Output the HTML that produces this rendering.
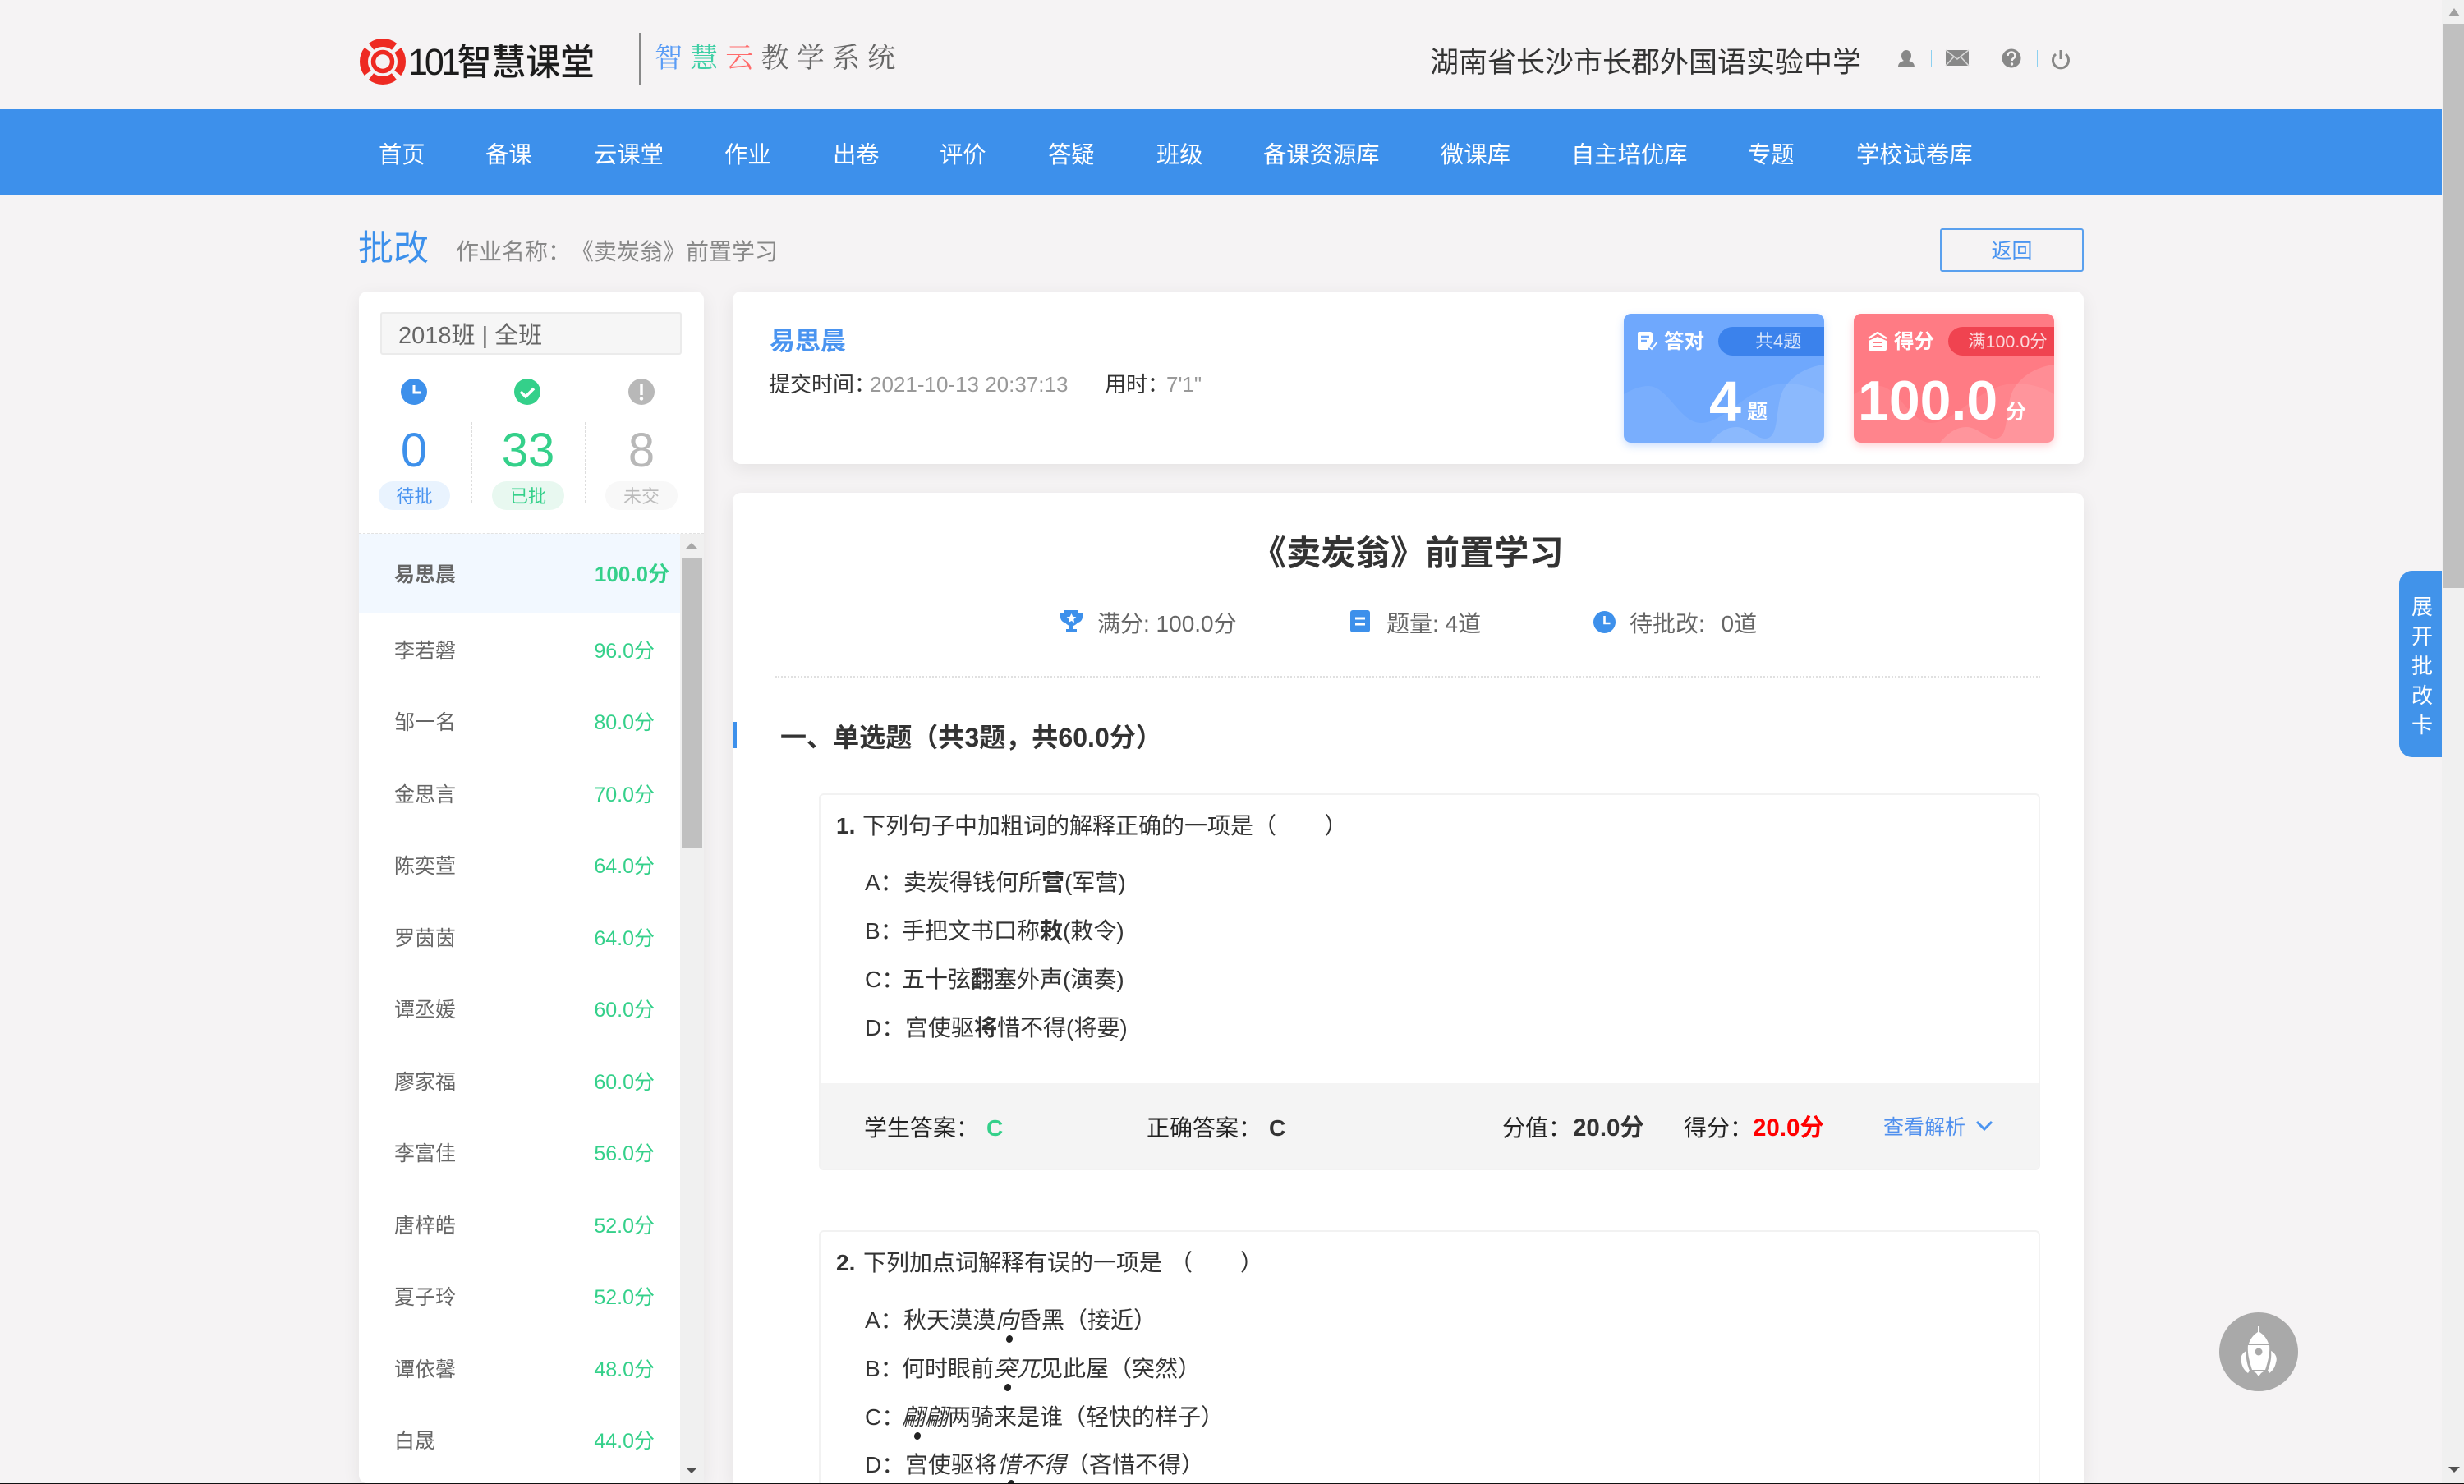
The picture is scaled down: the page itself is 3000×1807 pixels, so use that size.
<!DOCTYPE html>
<html lang="zh-CN"><head><meta charset="utf-8"><title>批改</title>
<style>
html,body{margin:0;padding:0;width:3000px;height:1807px;overflow:hidden;background:#f5f3f4;font-family:"Liberation Sans","Noto Sans CJK SC",sans-serif}
#w{position:relative;width:3000px;height:1807px;overflow:hidden}
.a{position:absolute}
.t{position:absolute;white-space:nowrap;line-height:40px;height:40px}
.c{position:absolute;text-align:center;white-space:nowrap;line-height:40px;height:40px}
.card{position:absolute;background:#fff;border-radius:10px;box-shadow:0 6px 22px rgba(0,0,0,.07)}
.nav{font-size:28.3px;color:#fff;top:168px}
.n{font-size:25px;color:#666;left:480px}
.s{font-size:25px;color:#34d08a;width:140px;left:657px;text-align:right}
.q{font-size:28px;color:#333}
.dot{position:absolute;width:8px;height:9px;border-radius:50%;background:#222;transform:rotate(20deg)}
em{font-style:italic}
b{font-weight:700}
</style></head><body><div id="w">

<!-- header -->
<svg class="a" style="left:438px;top:47px" width="56" height="56" viewBox="0 0 56 56">
<circle cx="28" cy="28" r="23" fill="none" stroke="#ee2a22" stroke-width="10" stroke-dasharray="30.1 6" stroke-dashoffset="15"/>
<circle cx="28" cy="28" r="11.5" fill="none" stroke="#ee2a22" stroke-width="5.5"/>
</svg>
<div class="t" style="left:497px;top:54px;font-size:41.800px;line-height:44px;height:44px;color:#1c1c1c;font-weight:500;transform:scaleY(1.06);transform-origin:0 50%"><span style="letter-spacing:-4px;font-size:43px">101</span>智慧课堂</div>
<div class="a" style="left:778px;top:40px;width:2px;height:63px;background:#888"></div>
<div class="t" style="left:797px;top:52px;font-family:'Liberation Serif','Noto Serif CJK SC',serif;font-size:34px;letter-spacing:9.200px;color:#666"><span style="color:#5a9cf5">智</span><span style="color:#3fcfa5">慧</span><span style="color:#ff6b6b">云</span>教学系统</div>

<div class="t" style="left:1741px;top:57px;font-size:35px;color:#333">湖南省长沙市长郡外国语实验中学</div>

<svg class="a" style="left:2300px;top:50px" width="230" height="40" viewBox="0 0 230 40">
<ellipse cx="21" cy="18" rx="6" ry="7" fill="#888"/><path d="M11 32c0-6 4-7 7-8h6c3 1 7 2 7 8z" fill="#888"/>
<rect x="51" y="11" width="1" height="20" fill="#8cd0f0"/>
<rect x="69" y="11" width="28" height="19" fill="#888"/><path d="M69 11l14 11 14-11M69 30l10-11M97 30l-10-11" fill="none" stroke="#d8d8d8" stroke-width="1.6"/>
<rect x="115" y="11" width="1" height="20" fill="#8cd0f0"/>
<circle cx="149" cy="21" r="11.5" fill="#888"/><path d="M144.500 18c0-6 9-6 9 0 0 3-4 3-4 6" fill="none" stroke="#f5f3f4" stroke-width="2.600"/><circle cx="149.500" cy="28" r="1.700" fill="#f5f3f4"/>
<rect x="180" y="11" width="1" height="20" fill="#8cd0f0"/>
<path d="M203 16a9.500 9.500 0 1 0 12 0" fill="none" stroke="#888" stroke-width="3"/><path d="M209 11v11" stroke="#888" stroke-width="3"/>
</svg>

<!-- nav -->
<div class="a" style="left:0;top:133px;width:2973px;height:105px;background:#3d90eb"></div>
<div class="t nav" style="left:461px">首页</div>
<div class="t nav" style="left:591px">备课</div>
<div class="t nav" style="left:723px">云课堂</div>
<div class="t nav" style="left:882px">作业</div>
<div class="t nav" style="left:1014px">出卷</div>
<div class="t nav" style="left:1144px">评价</div>
<div class="t nav" style="left:1276px">答疑</div>
<div class="t nav" style="left:1408px">班级</div>
<div class="t nav" style="left:1538px">备课资源库</div>
<div class="t nav" style="left:1754px">微课库</div>
<div class="t nav" style="left:1913px">自主培优库</div>
<div class="t nav" style="left:2128px">专题</div>
<div class="t nav" style="left:2260px">学校试卷库</div>

<!-- title row -->
<div class="t" style="left:436px;top:283px;font-size:43px;color:#3d90eb">批改</div>
<div class="t" style="left:555px;top:287px;font-size:28px;color:#888">作业名称：</div>
<div class="t" style="left:695px;top:287px;font-size:28px;color:#888">《卖炭翁》前置学习</div>
<div class="c" style="left:2362px;top:278px;width:171px;height:49px;line-height:53px;border:2px solid #5aa0ee;border-radius:3px;font-size:25px;color:#4a94f0">返回</div>

<!-- left panel -->
<div class="card" style="left:437px;top:355px;width:420px;height:1451px"></div>
<div class="t" style="left:463px;top:380px;width:343px;height:48px;line-height:55px;padding-left:20px;background:#f6f6f6;border:2px solid #ebebeb;border-radius:3px;font-size:29px;color:#666">2018班 | 全班</div>

<svg class="a" style="left:488px;top:461px" width="32" height="32"><circle cx="16" cy="16" r="16" fill="#3d90eb"/><path d="M16 8v9h8" fill="none" stroke="#fff" stroke-width="3"/></svg>
<svg class="a" style="left:626px;top:461px" width="32" height="32"><circle cx="16" cy="16" r="16" fill="#34d08a"/><path d="M8 16l6 6 10-10" fill="none" stroke="#fff" stroke-width="3.500"/></svg>
<svg class="a" style="left:765px;top:461px" width="32" height="32"><circle cx="16" cy="16" r="16" fill="#b8b8b8"/><path d="M16 7v13" stroke="#fff" stroke-width="3.500"/><circle cx="16" cy="24.500" r="2.200" fill="#fff"/></svg>

<div class="c" style="left:454px;top:519px;width:100px;height:60px;line-height:60px;font-size:58px;color:#3d90eb">0</div>
<div class="c" style="left:593px;top:519px;width:100px;height:60px;line-height:60px;font-size:58px;color:#34d08a">33</div>
<div class="c" style="left:731px;top:519px;width:100px;height:60px;line-height:60px;font-size:58px;color:#b8b8b8">8</div>

<div class="c" style="left:461px;top:586px;width:87px;height:35px;line-height:38px;border-radius:18px;background:#e9f3fe;color:#4a94f0;font-size:22px">待批</div>
<div class="c" style="left:599px;top:586px;width:88px;height:35px;line-height:38px;border-radius:18px;background:#e8f8f0;color:#34d08a;font-size:22px">已批</div>
<div class="c" style="left:737px;top:586px;width:88px;height:35px;line-height:38px;border-radius:18px;background:#f8f8f8;color:#bbb;font-size:22px">未交</div>
<div class="a" style="left:574px;top:514px;height:98px;border-left:1px dashed #ddd"></div>
<div class="a" style="left:712px;top:514px;height:98px;border-left:1px dashed #ddd"></div>
<div class="a" style="left:437px;top:649px;width:420px;border-top:1px dashed #e2e2e2"></div>

<div class="a" style="left:437px;top:650px;width:391px;height:97px;background:#f2f8ff"></div>
<div class="a" style="left:828px;top:650px;width:29px;height:1156px;background:#f0f0f0"></div>
<div class="a" style="left:830px;top:679px;width:25px;height:354px;background:#c0c0c0"></div>
<svg class="a" style="left:835px;top:660px" width="14" height="10"><path d="M0 8L7 1l7 7z" fill="#a8a8a8"/></svg>
<svg class="a" style="left:835px;top:1786px" width="14" height="10"><path d="M0 1l7 7 7-7z" fill="#505050"/></svg>

<div class="t n" style="top:680px;font-weight:700">易思晨</div><div class="t s" style="top:679px;left:675px;font-weight:700;font-size:26px">100.0分</div>
<div class="t n" style="top:773px">李若磐</div><div class="t s" style="top:773px">96.0分</div>
<div class="t n" style="top:860px">邹一名</div><div class="t s" style="top:860px">80.0分</div>
<div class="t n" style="top:948px">金思言</div><div class="t s" style="top:948px">70.0分</div>
<div class="t n" style="top:1035px">陈奕萱</div><div class="t s" style="top:1035px">64.0分</div>
<div class="t n" style="top:1123px">罗茵茵</div><div class="t s" style="top:1123px">64.0分</div>
<div class="t n" style="top:1210px">谭丞媛</div><div class="t s" style="top:1210px">60.0分</div>
<div class="t n" style="top:1298px">廖家福</div><div class="t s" style="top:1298px">60.0分</div>
<div class="t n" style="top:1385px">李富佳</div><div class="t s" style="top:1385px">56.0分</div>
<div class="t n" style="top:1473px">唐梓皓</div><div class="t s" style="top:1473px">52.0分</div>
<div class="t n" style="top:1560px">夏子玲</div><div class="t s" style="top:1560px">52.0分</div>
<div class="t n" style="top:1648px">谭依馨</div><div class="t s" style="top:1648px">48.0分</div>
<div class="t n" style="top:1735px">白晟</div><div class="t s" style="top:1735px">44.0分</div>

<!-- student card -->
<div class="card" style="left:892px;top:355px;width:1645px;height:210px"></div>
<div class="t" style="left:937px;top:396px;font-size:31px;font-weight:700;color:#4a94f0">易思晨</div>
<div class="t" style="left:936px;top:448px;font-size:26px;color:#333">提交时间：</div>
<div class="t" style="left:1059px;top:448px;font-size:26px;color:#999">2021-10-13 20:37:13</div>
<div class="t" style="left:1345px;top:448px;font-size:26px;color:#333">用时：</div>
<div class="t" style="left:1420px;top:448px;font-size:26px;color:#999">7'1"</div>

<!-- blue stat -->
<div class="a" style="left:1977px;top:382px;width:244px;height:157px;background:#6fa8fd;border-radius:9px;overflow:hidden;box-shadow:0 4px 10px rgba(90,150,250,.3)">
<svg class="a" style="left:0;top:0" width="244" height="157"><path d="M0 98C10 92 20 88 30 88c24 0 38 45 64 45 30 0 60-48 103-48 18 0 35 5 47 13v59H0z" fill="#fff" fill-opacity=".07"/><path d="M105 157c10-12 20-19 32-19 14 0 24 14 35 14 20 0 10-44 25-64 12-16 30-24 47-26v95z" fill="#fff" fill-opacity=".14"/></svg>
<div class="a" style="left:115px;top:16px;width:129px;height:35px;background:#3b82ec;border-radius:18px 0 0 18px"></div>
<div class="t" style="left:160px;top:14px;font-size:22px;color:rgba(255,255,255,.78)">共4题</div>
<svg class="a" style="left:17px;top:22px" width="25" height="23"><path d="M2 0h13a3 3 0 0 1 3 3v9l-6 10H2a2 2 0 0 1-2-2V2a2 2 0 0 1 2-2z" fill="#fff"/><path d="M4 6h10M4 11h7" stroke="#6fa8fd" stroke-width="2.400"/><path d="M14 18l3 3 7-9" fill="none" stroke="#fff" stroke-width="1.800"/></svg>
<div class="t" style="left:49px;top:15px;font-size:24.500px;font-weight:700;color:#fff">答对</div>
<div class="t" style="left:104px;top:72px;font-size:70px;height:70px;line-height:70px;font-weight:700;color:#fff">4</div>
<div class="t" style="left:150px;top:100px;font-size:25px;font-weight:700;color:#fff">题</div>
</div>

<!-- red stat -->
<div class="a" style="left:2257px;top:382px;width:244px;height:157px;background:#ff7b84;border-radius:9px;overflow:hidden;box-shadow:0 4px 10px rgba(255,110,120,.3)">
<svg class="a" style="left:0;top:0" width="244" height="157"><path d="M0 98C10 92 20 88 30 88c24 0 38 45 64 45 30 0 60-48 103-48 18 0 35 5 47 13v59H0z" fill="#fff" fill-opacity=".07"/><path d="M105 157c10-12 20-19 32-19 14 0 24 14 35 14 20 0 10-44 25-64 12-16 30-24 47-26v95z" fill="#fff" fill-opacity=".14"/></svg>
<div class="a" style="left:115px;top:16px;width:129px;height:35px;background:#f04350;border-radius:18px 0 0 18px"></div>
<div class="t" style="left:139px;top:14px;font-size:21.500px;color:rgba(255,255,255,.8)">满100.0分</div>
<svg class="a" style="left:17px;top:22px" width="24" height="23"><path d="M1 8l11-7 11 7" fill="none" stroke="#fff" stroke-width="2.400"/><path d="M1 11l11-5 11 5v10a2 2 0 0 1-2 2H3a2 2 0 0 1-2-2z" fill="#fff"/><path d="M7 13h10M7 18h10" stroke="#ff7b84" stroke-width="2"/></svg>
<div class="t" style="left:49px;top:15px;font-size:24.500px;font-weight:700;color:#fff">得分</div>
<div class="t" style="left:5px;top:71px;font-size:68px;height:70px;line-height:70px;font-weight:700;color:#fff">100.0</div>
<div class="t" style="left:185px;top:100px;font-size:25px;font-weight:700;color:#fff">分</div>
</div>

<!-- main card -->
<div class="card" style="left:892px;top:600px;width:1645px;height:1206px;border-radius:10px 10px 0 0"></div>
<div class="t" style="left:1524px;top:652px;font-size:42px;letter-spacing:.2px;height:44px;line-height:44px;font-weight:700;color:#333">《卖炭翁》前置学习</div>

<svg class="a" style="left:1291px;top:743px" width="27" height="28" viewBox="0 0 27 28"><path d="M5 0h17v3h5v5c0 4-3 7-6 7-1 2-3 3-5 4v4h4v3H7v-3h4v-4c-2-1-4-2-5-4-3 0-6-3-6-7V3h5z" fill="#3d90eb"/><path d="M13.500 4l1.800 3.700 4 .5-3 2.800.8 4-3.600-2-3.600 2 .8-4-3-2.800 4-.5z" fill="#fff"/></svg>
<div class="t" style="left:1336px;top:740px;font-size:28px;color:#666">满分: 100.0分</div>
<svg class="a" style="left:1644px;top:743px" width="24" height="27"><rect width="24" height="27" rx="3" fill="#3d90eb"/><path d="M6 10h12M6 17h12" stroke="#fff" stroke-width="3"/></svg>
<div class="t" style="left:1688px;top:740px;font-size:28px;color:#666">题量: 4道</div>
<svg class="a" style="left:1940px;top:744px" width="27" height="27"><circle cx="13.500" cy="13.500" r="13.500" fill="#3d90eb"/><path d="M13.500 6v9h7" fill="none" stroke="#fff" stroke-width="2.600"/></svg>
<div class="t" style="left:1984px;top:740px;font-size:28px;color:#666;word-spacing:12px">待批改: 0道</div>
<div class="a" style="left:944px;top:823px;width:1540px;border-top:2px dotted #e0e0e0"></div>

<div class="a" style="left:892px;top:879px;width:5px;height:32px;background:#3d90eb"></div>
<div class="t" style="left:950px;top:878px;font-size:32px;letter-spacing:.05px;font-weight:700;color:#333">一、单选题（共3题，共60.0分）</div>

<!-- Q1 -->
<div class="a" style="left:997px;top:966px;width:1483px;height:455px;border:2px solid #f2f2f2;border-radius:6px;overflow:hidden;background:#fff">
<div class="a" style="left:0;top:351px;width:1483px;height:104px;background:#f4f4f4"></div>
</div>
<div class="t q" style="left:1018px;top:986px;font-weight:700">1.</div>
<div class="t q" style="left:1050px;top:986px">下列句子中加粗词的解释正确的一项是（&nbsp;&nbsp;&nbsp;&nbsp;&nbsp;&nbsp;&nbsp;<span style="margin-left:4px">）</span></div>
<div class="t q" style="left:1053px;top:1055px">A：</div><div class="t q" style="left:1100px;top:1055px">卖炭得钱何所<b>营</b>(军营)</div>
<div class="t q" style="left:1053px;top:1114px">B：</div><div class="t q" style="left:1098px;top:1114px">手把文书口称<b>敕</b>(敕令)</div>
<div class="t q" style="left:1053px;top:1173px">C：</div><div class="t q" style="left:1098px;top:1173px">五十弦<b>翻</b>塞外声(演奏)</div>
<div class="t q" style="left:1053px;top:1232px">D：</div><div class="t q" style="left:1102px;top:1232px">宫使驱<b>将</b>惜不得(将要)</div>

<div class="t q" style="left:1052px;top:1354px;color:#222">学生答案：</div>
<div class="t q" style="left:1201px;top:1354px;font-weight:700;color:#34d08a">C</div>
<div class="t q" style="left:1396px;top:1354px;color:#222">正确答案：</div>
<div class="t q" style="left:1545px;top:1354px;font-weight:700">C</div>
<div class="t q" style="left:1829px;top:1354px;color:#222">分值：</div>
<div class="t q" style="left:1915px;top:1354px;font-weight:700;font-size:29.500px">20.0分</div>
<div class="t q" style="left:2050px;top:1354px;color:#222">得分：</div>
<div class="t q" style="left:2134px;top:1354px;font-weight:700;font-size:29.500px;color:#f00">20.0分</div>
<div class="t" style="left:2293px;top:1353px;font-size:25px;color:#5090ee">查看解析</div>
<svg class="a" style="left:2405px;top:1363px" width="22" height="16"><path d="M2 3l9 9 9-9" fill="none" stroke="#4a94f0" stroke-width="3"/></svg>

<!-- Q2 -->
<div class="a" style="left:997px;top:1498px;width:1483px;height:340px;border:2px solid #f2f2f2;border-radius:6px"></div>
<div class="t q" style="left:1018px;top:1518px;font-weight:700">2.</div>
<div class="t q" style="left:1051px;top:1518px">下列加点词解释有误的一项是</div>
<div class="t q" style="left:1424px;top:1518px">（</div><div class="t q" style="left:1510px;top:1518px">）</div>
<div class="t q" style="left:1053px;top:1588px">A：</div><div class="t q" style="left:1100px;top:1588px">秋天漠漠<em>向</em>昏黑（接近）</div>
<div class="dot" style="left:1225px;top:1626px"></div>
<div class="t q" style="left:1053px;top:1647px">B：</div><div class="t q" style="left:1098px;top:1647px">何时眼前<em>突兀</em>见此屋（突然）</div>
<div class="dot" style="left:1223px;top:1685px"></div>
<div class="t q" style="left:1053px;top:1706px">C：</div><div class="t q" style="left:1098px;top:1706px"><em>翩翩</em>两骑来是谁（轻快的样子）</div>
<div class="dot" style="left:1113px;top:1744px"></div>
<div class="t q" style="left:1053px;top:1764px">D：</div><div class="t q" style="left:1102px;top:1764px">宫使驱将<em>惜不得</em>（吝惜不得）</div>
<div class="dot" style="left:1227px;top:1802px"></div>

<!-- side tab -->
<div class="a" style="left:2921px;top:695px;width:52px;height:227px;background:#4193ea;border-radius:16px 0 0 16px"></div>
<div class="c" style="left:2921px;top:719px;width:56px;font-size:26px;color:#fff">展</div>
<div class="c" style="left:2921px;top:755px;width:56px;font-size:26px;color:#fff">开</div>
<div class="c" style="left:2921px;top:791px;width:56px;font-size:26px;color:#fff">批</div>
<div class="c" style="left:2921px;top:827px;width:56px;font-size:26px;color:#fff">改</div>
<div class="c" style="left:2921px;top:863px;width:56px;font-size:26px;color:#fff">卡</div>

<!-- rocket -->
<svg class="a" style="left:2702px;top:1598px" width="96" height="96" viewBox="0 0 96 96">
<circle cx="48" cy="48" r="48" fill="#a9a9a9"/>
<path d="M47 17h2v7c5 3 9 8 11 14H36c2-6 6-11 11-14z" fill="#fff"/>
<path d="M35 40h26c1 10-2 21-5 30H40c-3-9-6-20-5-30z" fill="#fff"/>
<circle cx="48" cy="48" r="4.500" fill="#a9a9a9"/>
<path d="M42 72h12l-3 2-3 4-3-4z" fill="#fff"/>
<path d="M33 47c-6 3-8 9-6 14 1 6 4 10 8 13l2-3c-3-7-5-16-4-24z" fill="#fff"/>
<path d="M63 47c6 3 8 9 6 14-1 6-4 10-8 13l-2-3c3-7 5-16 4-24z" fill="#fff"/>
</svg>

<!-- page scrollbar -->
<div class="a" style="left:2973px;top:0;width:27px;height:1807px;background:#f0f0f0"></div>
<div class="a" style="left:2975px;top:29px;width:25px;height:687px;background:#c0c0c0"></div>
<svg class="a" style="left:2981px;top:9px" width="14" height="12"><path d="M0 11L7 1l7 10z" fill="#a0a0a0"/></svg>
<svg class="a" style="left:2981px;top:1785px" width="14" height="10"><path d="M0 1l7 7 7-7z" fill="#505050"/></svg>
<div class="a" style="left:0;top:1806px;width:3000px;height:1px;background:#111"></div>
</div></body></html>
